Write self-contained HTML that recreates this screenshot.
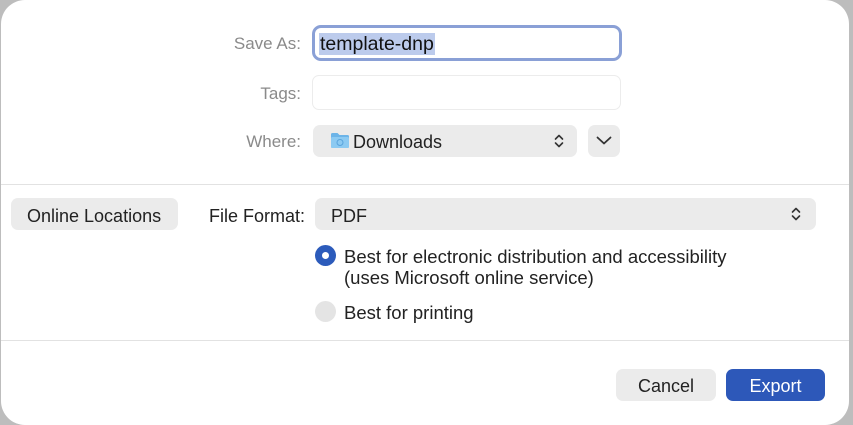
<!DOCTYPE html>
<html><head><style>
*{box-sizing:border-box;margin:0;padding:0}
body{width:853px;height:423px;background:#bdbdbd;font-family:"Liberation Sans",sans-serif;font-size:18px;color:#222;position:relative;overflow:hidden}
.win{position:absolute;left:1px;top:0;width:848px;height:425px;background:#fff;border-radius:24px}
.a{position:absolute}
.lbl{position:absolute;color:#8a8a8a;text-align:right;width:120px;line-height:20px;font-size:17px}
.pop{position:absolute;background:#ebebeb;border-radius:7px}
.sep{position:absolute;left:0;width:848px;height:1px;background:#e2e2e2}
.t{position:absolute;line-height:20px;white-space:nowrap}
</style></head><body>
<div class="win">
<div class="lbl" style="left:180px;top:34px">Save As:</div>
<div class="a" style="left:311px;top:25px;width:310px;height:36px;border:3px solid #8aa0d6;border-radius:9px"></div>
<div class="t" style="left:318px;top:33px;font-size:19.5px;line-height:22px;color:#111;background:#bccbec;padding:0 1px">template-dnp</div>
<div class="lbl" style="left:180px;top:84px">Tags:</div>
<div class="a" style="left:311px;top:75px;width:309px;height:35px;border:1px solid #ececec;border-radius:7px"></div>
<div class="lbl" style="left:180px;top:132px">Where:</div>
<div class="pop" style="left:312px;top:125px;width:264px;height:32px"></div>
<svg class="a" style="left:329px;top:132px" width="20" height="17" viewBox="0 0 20 17"><path d="M1 2.5a1.5 1.5 0 0 1 1.5-1.5h5l2 2h8a1.5 1.5 0 0 1 1.5 1.5v10a1.5 1.5 0 0 1-1.5 1.5h-15a1.5 1.5 0 0 1-1.5-1.5z" fill="#6cb4e8"/><rect x="1" y="5" width="18" height="11" rx="1.5" fill="#8ccaf2"/><circle cx="10" cy="10.5" r="3" fill="none" stroke="#5aa4dc" stroke-width="1"/></svg>
<div class="t" style="left:352px;top:132px">Downloads</div>
<svg class="a" style="left:552px;top:133px" width="12" height="16" viewBox="0 0 12 16"><path d="M2.5 6L6 2.5 9.5 6M2.5 10L6 13.5 9.5 10" fill="none" stroke="#333" stroke-width="1.6" stroke-linecap="round" stroke-linejoin="round"/></svg>
<div class="pop" style="left:587px;top:125px;width:32px;height:32px"></div>
<svg class="a" style="left:594px;top:134px" width="18" height="12" viewBox="0 0 18 12"><path d="M2.5 3.5L9 9.5 15.5 3.5" fill="none" stroke="#333" stroke-width="1.8" stroke-linecap="round" stroke-linejoin="round"/></svg>
<div class="sep" style="top:184px"></div>
<div class="pop" style="left:10px;top:198px;width:167px;height:32px"></div>
<div class="t" style="left:26px;top:206px">Online Locations</div>
<div class="t" style="left:208px;top:206px">File Format:</div>
<div class="pop" style="left:314px;top:198px;width:501px;height:32px"></div>
<div class="t" style="left:330px;top:206px">PDF</div>
<svg class="a" style="left:789px;top:206px" width="12" height="16" viewBox="0 0 12 16"><path d="M2.5 6L6 2.5 9.5 6M2.5 10L6 13.5 9.5 10" fill="none" stroke="#333" stroke-width="1.6" stroke-linecap="round" stroke-linejoin="round"/></svg>
<div class="a" style="left:314px;top:245px;width:21px;height:21px;border-radius:50%;background:#2c5bbb"></div>
<div class="a" style="left:321px;top:252px;width:7px;height:7px;border-radius:50%;background:#fff"></div>
<div class="t" style="left:343px;top:247px;font-size:18.5px">Best for electronic distribution and accessibility</div>
<div class="t" style="left:343px;top:268px;font-size:18.5px">(uses Microsoft online service)</div>
<div class="a" style="left:314px;top:301px;width:21px;height:21px;border-radius:50%;background:#e4e4e4"></div>
<div class="t" style="left:343px;top:303px;font-size:18.5px">Best for printing</div>
<div class="sep" style="top:340px"></div>
<div class="pop" style="left:615px;top:369px;width:100px;height:32px"></div>
<div class="t" style="left:615px;top:376px;width:100px;text-align:center">Cancel</div>
<div class="a" style="left:725px;top:369px;width:99px;height:32px;background:#2d58b9;border-radius:7px"></div>
<div class="t" style="left:725px;top:376px;width:99px;text-align:center;color:#fff">Export</div>
</div>
</body></html>
